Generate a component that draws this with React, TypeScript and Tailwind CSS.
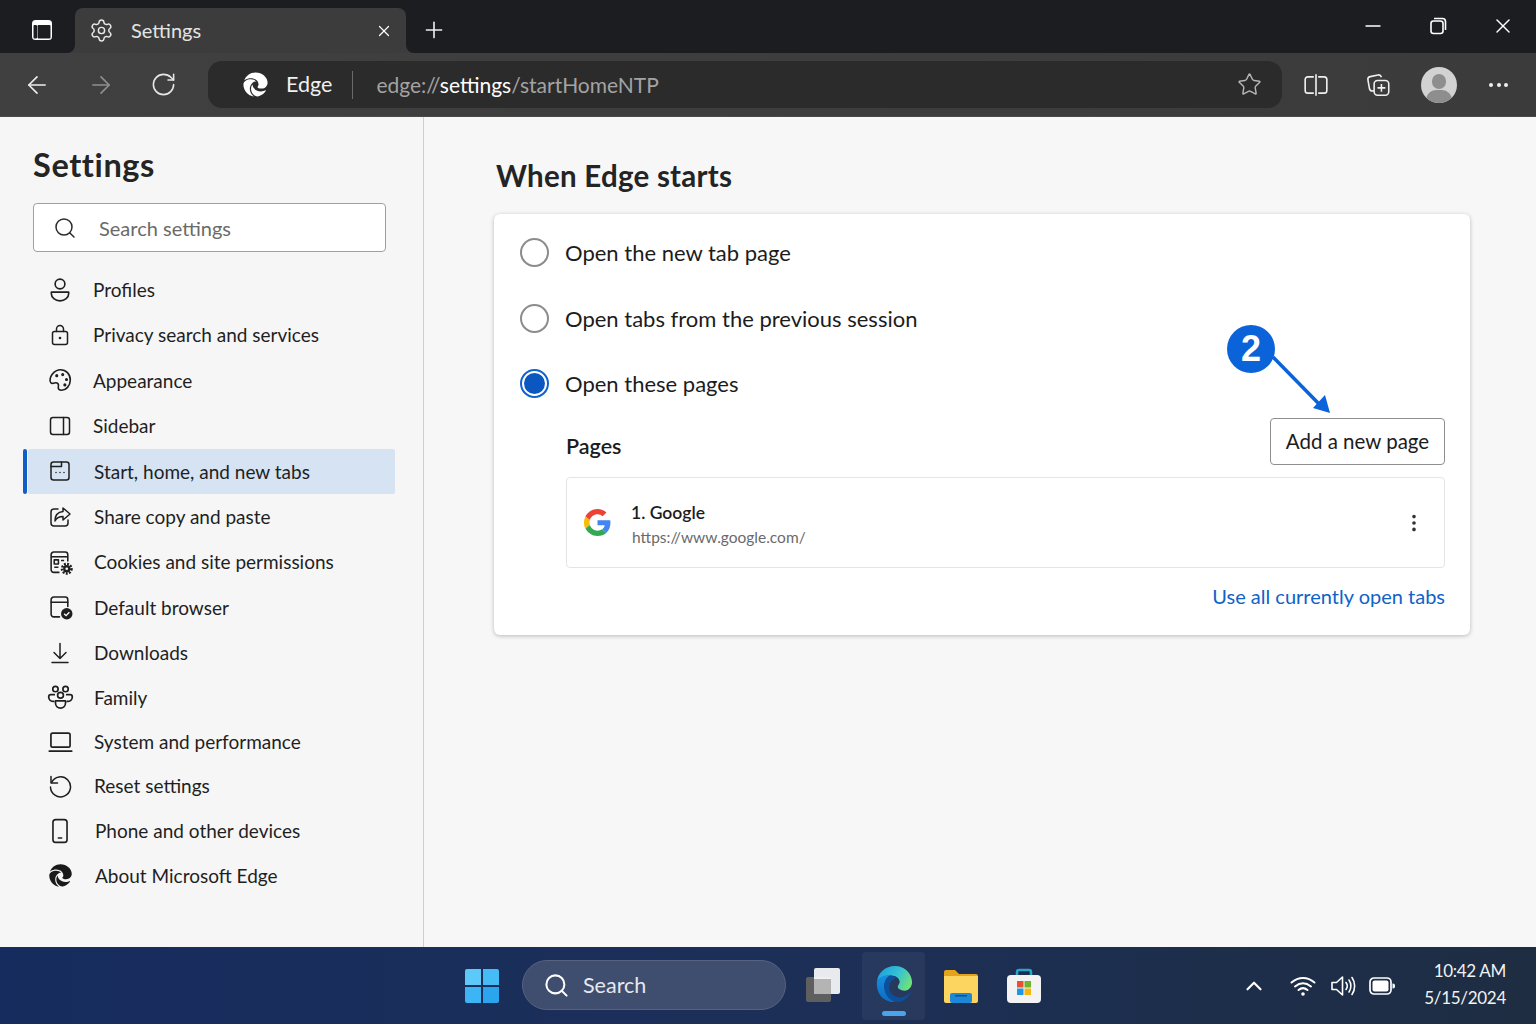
import type { ReactNode } from "react"
import {
  ArrowLeft,
  ArrowRight,
  ChevronUp,
  EllipsisVertical,
  Minus,
  Plus,
  RotateCw,
  Search,
  Settings,
  Star,
  X,
} from "lucide-react"
import { RiEdgeNewFill } from "react-icons/ri"

function Line({ children, className = "w-6 h-6" }: { children: ReactNode; className?: string }) {
  return (
    <svg
      viewBox="0 0 24 24"
      fill="none"
      stroke="currentColor"
      strokeWidth="1.5"
      strokeLinecap="round"
      strokeLinejoin="round"
      className={className}
    >
      {children}
    </svg>
  )
}

const navItems: { label: string; row: string; text: string; icon: ReactNode }[] = [
  {
    label: "Profiles",
    row: "h-[45px]",
    text: "ml-[18px]",
    icon: (
      <Line className="w-[26px] h-[26px]">
        <circle cx="12" cy="6.500" r="4.500" />
        <path d="M4 14h16v1.500c0 3.500-3.500 6.500-8 6.500s-8-3-8-6.500z" />
      </Line>
    ),
  },
  {
    label: "Privacy search and services",
    row: "h-[45.5px]",
    text: "ml-[18px]",
    icon: (
      <Line>
        <rect x="4.500" y="8.500" width="15" height="13" rx="2" />
        <path d="M8.500 8.500V6a3.500 3.500 0 0 1 7 0v2.500" />
        <circle cx="12" cy="15" r=".6" fill="currentColor" />
      </Line>
    ),
  },
  {
    label: "Appearance",
    row: "h-[45.5px]",
    text: "ml-[18px]",
    icon: (
      <Line className="w-[26px] h-[26px]">
        <path d="M12.500 2.500c5 0 9 4 9 9.500s-4 9.500-8 9.500c-2.500 0-3.500-1.500-3-3.500.5-2-.5-3.500-2.500-3.500-1 0-3 1.500-4.500 0C2 13 3 9 5 6.500s4.500-4 7.500-4z" />
        <circle cx="9" cy="8" r=".7" fill="currentColor" />
        <circle cx="14.500" cy="7" r=".7" fill="currentColor" />
        <circle cx="18" cy="11.500" r=".7" fill="currentColor" />
        <circle cx="16.500" cy="16.500" r=".7" fill="currentColor" />
      </Line>
    ),
  },
  {
    label: "Sidebar",
    row: "h-[45.5px]",
    text: "ml-[18px]",
    icon: (
      <Line>
        <rect x="2.500" y="3.500" width="19" height="17" rx="2.500" />
        <path d="M15.500 3.500v17" />
      </Line>
    ),
  },
  {
    label: "Start, home, and new tabs",
    row: "h-[45.500px]",
    text: "ml-[19px]",
    icon: (
      <Line>
        <rect x="3" y="3" width="18" height="18" rx="2.500" />
        <path d="M3 7.500h10.500V3" />
        <path d="M8 13.500h.01M12 13.500h.01M16 13.500h.01" />
      </Line>
    ),
  },
  {
    label: "Share copy and paste",
    row: "h-[45.500px]",
    text: "ml-[19px]",
    icon: (
      <Line>
        <path d="M10 4H6a3 3 0 0 0-3 3v11a3 3 0 0 0 3 3h11a3 3 0 0 0 3-3v-3" />
        <path d="M15 3l7 6-7 6v-3.500c-4 0-6.500 1.500-8 4.500 0-5.500 3-9 8-9.500z" />
      </Line>
    ),
  },
  {
    label: "Cookies and site permissions",
    row: "h-[45px]",
    text: "ml-[19px]",
    icon: (
      <svg viewBox="0 0 24 24" className="w-[25px] h-[25px]">
        <g fill="none" stroke="currentColor" strokeWidth="1.500" strokeLinejoin="round">
          <path d="M11 21.500H5.500a2.500 2.500 0 0 1-2.500-2.500V4.500A2.500 2.500 0 0 1 5.500 2h11A2.500 2.500 0 0 1 19 4.500V11" />
          <path d="M3 6.500h16" />
          <path d="M6 9.500h4v4H6zM6 16.500h4M12.500 10h3" />
        </g>
        <circle cx="18" cy="18" r="4.500" fill="none" stroke="currentColor" strokeWidth="2.500" strokeDasharray="1.800 1.200" />
        <circle cx="18" cy="18" r="3.500" fill="currentColor" />
        <circle cx="18" cy="18" r="1.300" fill="#f6f6f6" />
      </svg>
    ),
  },
  {
    label: "Default browser",
    row: "h-[45.500px]",
    text: "ml-[19px]",
    icon: (
      <svg viewBox="0 0 24 24" className="w-[25px] h-[25px]">
        <g fill="none" stroke="currentColor" strokeWidth="1.500" strokeLinecap="round">
          <path d="M11 21H5.500A2.500 2.500 0 0 1 3 18.500v-14A2.500 2.500 0 0 1 5.500 2h11A2.500 2.500 0 0 1 19 4.500V11" />
          <path d="M3 7h16" />
        </g>
        <circle cx="18" cy="18" r="5.500" fill="currentColor" />
        <path d="M15.500 18l1.800 1.800 3.200-3.300" fill="none" stroke="#fff" strokeWidth="1.300" />
      </svg>
    ),
  },
  {
    label: "Downloads",
    row: "h-[45px]",
    text: "ml-[19px]",
    icon: (
      <Line>
        <path d="M12 2.500V17M6 11.500l6 6 6-6M4 21.500h16" />
      </Line>
    ),
  },
  {
    label: "Family",
    row: "h-[44.500px]",
    text: "ml-[19px]",
    icon: (
      <Line className="w-[27px] h-[27px]">
        <circle cx="7.500" cy="4.500" r="2.400" />
        <circle cx="16.500" cy="4.500" r="2.400" />
        <circle cx="12" cy="10" r="2.600" />
        <path d="M7.500 15h9v1.500c0 3-2 5-4.500 5s-4.500-2-4.500-5z" />
        <path d="M6.500 9.500H3.500C2 9.500 1.500 10.500 1.500 11.500c0 2.500 2 4 4.500 4M17.500 9.500h3c1.500 0 2 1 2 2 0 2.500-2 4-4.500 4" />
      </Line>
    ),
  },
  {
    label: "System and performance",
    row: "h-[44px]",
    text: "ml-[19px]",
    icon: (
      <Line className="w-[27px] h-[27px]">
        <rect x="3.500" y="4.500" width="17" height="12.500" rx="1.500" />
        <path d="M2 20.500h20" />
      </Line>
    ),
  },
  {
    label: "Reset settings",
    row: "h-[45px]",
    text: "ml-[19px]",
    icon: (
      <Line>
        <path d="M3 2.500V9h6.500" />
        <path d="M3.500 8.500A10 10 0 1 1 2.500 13" />
      </Line>
    ),
  },
  {
    label: "Phone and other devices",
    row: "h-[44.500px]",
    text: "ml-[20px]",
    icon: (
      <Line className="w-[26px] h-[26px]">
        <rect x="5.500" y="1.500" width="13" height="21" rx="2.500" />
        <path d="M10.500 18.500h3" />
      </Line>
    ),
  },
  {
    label: "About Microsoft Edge",
    row: "h-[45px]",
    text: "ml-[20px]",
    icon: <RiEdgeNewFill className="w-[27px] h-[27px] text-[#1a1a1a]" />,
  },
]

function ColorEdge() {
  return (
    <svg viewBox="0 0 40 40" className="w-[38px] h-[38px]">
      <defs>
        <linearGradient id="edgeTop" x1="0" y1="0.2" x2="1" y2="0.6">
          <stop offset="0" stopColor="#1aa0dc" />
          <stop offset="0.55" stopColor="#35c1d4" />
          <stop offset="1" stopColor="#6fe07a" />
        </linearGradient>
        <linearGradient id="edgeBody" x1="0" y1="0" x2="0" y2="1">
          <stop offset="0" stopColor="#1690e0" />
          <stop offset="1" stopColor="#0b6cc4" />
        </linearGradient>
      </defs>
      <path d="M2 18C3 8 11 1 21 1c10 0 18 8 18 17 0 5-3 9-8 9-4 0-7-2-7-4 0-2 2-3 2-5 0-4-4-7-9-7C10 11 4 13 2 18z" fill="url(#edgeTop)" />
      <path d="M2 18C4 13 10 10 16 11c-4 2-7 7-6 14 1 7 6 12 12 14C10 40 1 31 2 18z" fill="url(#edgeBody)" />
      <path d="M16 11c3 0 5 1 6 3-4 1-7 5-7 10 0 5 4 9 9 10 5 1 10-1 14-6-2 6-9 12-16 11-6-2-11-7-12-14-1-7 2-12 6-14z" fill="#0c4f9c" />
    </svg>
  )
}

function GoogleLogo() {
  return (
    <svg viewBox="0 0 48 48" className="w-[27px] h-[27px]">
      <path fill="#EA4335" d="M24 9.500c3.500 0 6.700 1.300 9.100 3.500l6.800-6.800C35.800 2.400 30.300 0 24 0 14.600 0 6.500 5.400 2.600 13.200l7.900 6.200C12.400 13.700 17.700 9.500 24 9.500z" />
      <path fill="#4285F4" d="M47 24.500c0-1.600-.1-3.100-.4-4.500H24v9h12.900c-.6 3-2.200 5.500-4.700 7.200l7.700 6C44.400 38 47 31.800 47 24.500z" />
      <path fill="#FBBC05" d="M10.500 28.600c-.5-1.400-.8-3-.8-4.600s.3-3.200.8-4.600l-7.900-6.200C.9 16.500 0 20.100 0 24s.9 7.500 2.600 10.800l7.900-6.200z" />
      <path fill="#34A853" d="M24 48c6.500 0 11.900-2.100 15.900-5.800l-7.700-6c-2.200 1.500-4.900 2.300-8.200 2.300-6.300 0-11.600-4.200-13.500-9.900l-7.900 6.200C6.500 42.600 14.600 48 24 48z" />
    </svg>
  )
}

function Radio({ checked, label }: { checked?: boolean; label: string }) {
  return (
    <div className="flex items-center h-[65.500px]">
      {checked ? (
        <div className="w-[29px] h-[29px] rounded-full border-2 border-[#0f62d0] bg-white flex items-center justify-center">
          <div className="w-[21px] h-[21px] rounded-full bg-[#0a57c2]" />
        </div>
      ) : (
        <div className="w-[29px] h-[29px] rounded-full border-2 border-[#8c8c8c] bg-white" />
      )}
      <span className="ml-[16px] text-[22px] text-[#1c1c1c]">{label}</span>
    </div>
  )
}

export default function App() {
  return (
    <div className="w-[1536px] h-[1024px] overflow-hidden flex flex-col font-['Lato',sans-serif] bg-[#f7f7f7]">
      {/* title bar */}
      <div className="h-[53px] bg-[#1c1d20] flex items-end shrink-0 text-white">
        <div className="w-[75px] h-[53px] flex items-center justify-center pl-[9px] pt-[7px]">
          <svg viewBox="0 0 24 24" className="w-[24px] h-[24px]">
            <rect x="2" y="2" width="20" height="20" rx="3.500" fill="#fff" />
            <rect x="7.500" y="7" width="13" height="13.500" rx="1" fill="#1c1d20" />
            <rect x="3.500" y="7" width="3.500" height="13.500" rx="1" fill="#1c1d20" />
          </svg>
        </div>
        <div className="relative w-[331px] h-[45px] bg-[#3c3c3c] rounded-t-lg flex items-center pl-[14px] pr-[13px]">
          <div className="absolute left-[-8px] bottom-0 w-2 h-2 bg-[#3c3c3c]">
            <div className="w-2 h-2 bg-[#1c1d20] rounded-br-lg" />
          </div>
          <div className="absolute right-[-8px] bottom-0 w-2 h-2 bg-[#3c3c3c]">
            <div className="w-2 h-2 bg-[#1c1d20] rounded-bl-lg" />
          </div>
          <Settings className="w-[25px] h-[25px] text-[#e8e8e8]" strokeWidth={1.4} />
          <span className="ml-[17px] pb-[2px] text-[20px] text-[#e4e4e4]">Settings</span>
          <X className="ml-auto w-[18px] h-[18px] text-white" strokeWidth={1.6} />
        </div>
        <div className="ml-[15px] h-[53px] flex items-center pt-[7px]">
          <Plus className="w-[26px] h-[26px] text-[#eeeeee]" strokeWidth={1.5} />
        </div>
        <div className="ml-auto h-[53px] flex items-center pb-[1px] pr-[21px] gap-[41px]">
          <Minus className="w-[24px] h-[24px]" strokeWidth={1.4} />
          <svg viewBox="0 0 24 24" fill="none" stroke="currentColor" strokeWidth="1.600" className="w-[24px] h-[24px]">
            <rect x="5" y="7" width="12" height="12.500" rx="2.500" />
            <path d="M8 4.500h8.500a3 3 0 0 1 3 3V16" />
          </svg>
          <X className="w-[24px] h-[24px]" strokeWidth={1.4} />
        </div>
      </div>

      {/* toolbar */}
      <div className="h-[64px] bg-gradient-to-r from-[#404040] to-[#3b3b3b] flex items-center shrink-0 border-b border-[#4a4a4a]">
        <div className="ml-[23px] flex items-center gap-[35.500px]">
          <ArrowLeft className="w-[28px] h-[28px] text-[#ededed]" strokeWidth={1.4} />
          <ArrowRight className="w-[28px] h-[28px] text-[#8f8f8f]" strokeWidth={1.4} />
          <RotateCw className="w-[27px] h-[27px] text-[#e6e6e6]" strokeWidth={1.4} />
        </div>
        <div className="ml-[31px] w-[1074px] h-[47px] rounded-[14px] bg-[#2b2b2b] flex items-center pl-[33px] pr-[20px]">
          <RiEdgeNewFill className="w-[29px] h-[29px] text-white" />
          <span className="ml-[16px] text-[21.500px] text-[#f0f0f0]">Edge</span>
          <div className="ml-[20px] w-px h-[28px] bg-[#6a6a6a]" />
          <span className="ml-[23px] text-[21px] text-[#a3a3a3]">
            edge://<span className="text-white">settings</span>/startHomeNTP
          </span>
          <Star className="ml-auto w-[25px] h-[25px] text-[#b5b5b5]" strokeWidth={1.4} />
        </div>
        <div className="ml-[21px] flex items-center text-[#efefef]">
          <svg viewBox="0 0 24 24" fill="none" stroke="currentColor" strokeWidth="1.500" className="w-[26px] h-[26px]">
            <path d="M10 4.500H4.500A2.500 2.500 0 0 0 2 7v10a2.500 2.500 0 0 0 2.500 2.500H10M14 4.500h5.500A2.500 2.500 0 0 1 22 7v10a2.500 2.500 0 0 1-2.500 2.500H14" />
            <path d="M12 2v20" />
          </svg>
          <svg viewBox="0 0 24 24" fill="none" stroke="currentColor" strokeWidth="1.400" strokeLinejoin="round" className="ml-[35px] w-[27px] h-[27px]">
            <path d="M9 17.500l-1.500.3c-1.500 0-2.300-.8-2.600-2L3.500 8c-.3-1.500.5-2.700 2-3l7-1.500c1.500-.3 2.500.5 3 2" />
            <rect x="9" y="8.500" width="13" height="13" rx="3" />
            <path d="M15.500 11.500v7M12 15h7" />
          </svg>
          <div className="relative ml-[30px] w-[36px] h-[36px] rounded-full bg-[#d2d2d2] overflow-hidden">
            <div className="absolute left-[11px] top-[7px] w-[14px] h-[15px] rounded-full bg-[#8e8e8e]" />
            <div className="absolute left-[5px] top-[23px] w-[26px] h-[20px] rounded-full bg-[#8e8e8e]" />
          </div>
          <div className="ml-[32px] flex gap-[3.500px]">
            <div className="w-[4px] h-[4px] rounded-full bg-[#efefef]" />
            <div className="w-[4px] h-[4px] rounded-full bg-[#efefef]" />
            <div className="w-[4px] h-[4px] rounded-full bg-[#efefef]" />
          </div>
        </div>
      </div>

      {/* body */}
      <div className="flex-1 flex min-h-0">
        <aside className="w-[424px] shrink-0 bg-[#f6f6f6] border-r border-[#cfcfcf] pt-[25px]">
          <h1 className="ml-[33px] text-[32.500px] leading-[46px] tracking-[0.6px] font-bold text-[#242424]">Settings</h1>
          <div className="ml-[33px] mt-[15px] w-[353px] h-[49px] rounded-[4px] border border-[#a0a0a0] bg-white flex items-center pl-[19px]">
            <Search className="w-[24px] h-[24px] text-[#2a2a2a]" strokeWidth={1.5} />
            <span className="ml-[22px] text-[20px] text-[#6a6a6a]">Search settings</span>
          </div>
          <nav className="mt-[15px] ml-[23px] w-[372px]">
            {navItems.map((item) => {
              const active = item.label === "Start, home, and new tabs"
              return (
                <div key={item.label} className={`${item.row} flex items-center text-[#1f1f1f]`}>
                  <div className={`w-[4px] h-full rounded-sm ${active ? "bg-[#0f5fc4]" : ""}`} />
                  <div className={`ml-[1px] flex-1 h-full flex items-center rounded-[2px] ${active ? "bg-[#d5e3f2]" : ""}`}>
                    <div className="ml-[17px] w-[30px] flex items-center justify-center">{item.icon}</div>
                    <span className={`${item.text} pt-[1px] text-[19px]`}>{item.label}</span>
                  </div>
                </div>
              )
            })}
          </nav>
        </aside>

        <main className="flex-1 pl-[70px] pt-[36px]">
          <h2 className="ml-[2px] text-[29.500px] leading-[46px] tracking-[0.25px] font-bold text-[#242424]">When Edge starts</h2>
          <section className="relative mt-[15px] w-[976px] h-[421px] rounded-[6px] bg-white shadow-[0_1px_4px_rgba(0,0,0,0.25)] pl-[26px] pt-[6px]">
            <Radio label="Open the new tab page" />
            <Radio label="Open tabs from the previous session" />
            <Radio checked label="Open these pages" />

            <div className="ml-[46px] mr-[25px] flex items-end justify-between h-[48px]">
              <span className="pb-[2px] text-[21.500px] font-semibold text-[#1c1c1c]">Pages</span>
              <button className="w-[175px] h-[47px] rounded-[4px] border border-[#8f8f8f] bg-white text-[20.500px] text-[#1c1c1c]">
                Add a new page
              </button>
            </div>
            <div className="mt-[12px] ml-[46px] mr-[25px] h-[91px] rounded-[4px] border border-[#e4e4e4] flex items-center pl-[17px] pr-[19px]">
              <GoogleLogo />
              <div className="ml-[20px] pt-[5px] flex flex-col">
                <span className="text-[17.500px] leading-[25px] font-semibold text-[#1c1c1c]">1. Google</span>
                <span className="ml-[1px] text-[15.500px] leading-[25px] text-[#6a6a6a]">https://www.google.com/</span>
              </div>
              <EllipsisVertical className="ml-auto mt-[1px] w-[22px] h-[22px] text-[#333333]" strokeWidth={2} />
            </div>
            <div className="mt-[13px] mr-[25px] text-right text-[20px] text-[#0f62c8]">Use all currently open tabs</div>

            {/* annotation over the card */}
            <div className="absolute left-[733px] top-[111px] w-[48px] h-[48px] rounded-full bg-[#0a63d8] flex items-center justify-center text-white text-[36px] font-bold font-['Liberation_Sans',sans-serif]">
              2
            </div>
            <svg viewBox="0 0 70 70" className="absolute left-[775px] top-[138px] w-[70px] h-[70px]">
              <path d="M4 5L52 54" stroke="#0a63d8" strokeWidth="3.500" fill="none" />
              <path d="M61 61L56 43 44 56z" fill="#0a63d8" />
            </svg>
          </section>
        </main>
      </div>

      {/* taskbar */}
      <div className="h-[77px] shrink-0 bg-gradient-to-r from-[#162c5e] via-[#1c2f58] to-[#1e2d42] flex items-center text-white relative">
        <div className="ml-[465px] grid grid-cols-2 gap-[2px] w-[34px] h-[34px]">
          <div className="rounded-tl-[2px] bg-[#5cc9f8]" />
          <div className="rounded-tr-[2px] bg-[#45bcf5]" />
          <div className="rounded-bl-[2px] bg-[#3db4f3]" />
          <div className="rounded-br-[2px] bg-[#2ba6ee]" />
        </div>
        <div className="ml-[23px] -mt-[1px] w-[264px] h-[50px] rounded-full bg-[#3f4d6e] border border-[#56627f] flex items-center pl-[20px]">
          <Search className="w-[27px] h-[27px]" strokeWidth={1.8} />
          <span className="ml-[13px] text-[21.500px] text-[#e6e8ee]">Search</span>
        </div>
        <div className="relative ml-[20px] w-[34px] h-[34px] -mt-[2px]">
          <div className="absolute left-0 bottom-0 w-[25px] h-[25px] rounded-[2px] bg-[#5f5f5f]" />
          <div className="absolute right-0 top-0 w-[26px] h-[26px] rounded-[2px] bg-white/90" />
          <div className="absolute left-[8px] top-[11px] w-[17px] h-[15px] bg-[#b4b4b4]" />
        </div>
        <div className="ml-[22px] w-[63px] h-[68px] rounded-[4px] bg-white/5 flex flex-col items-center pt-[13px]">
          <ColorEdge />
          <div className="mt-[8px] w-[24px] h-[5px] rounded-full bg-[#4ba3ea]" />
        </div>
        <svg viewBox="0 0 36 36" className="ml-[18px] w-[36px] h-[36px]">
          <path d="M1 4a2 2 0 0 1 2-2h9l4 4h17a2 2 0 0 1 2 2v3H1z" fill="#e5a21b" />
          <path d="M1 8h34v25a2 2 0 0 1-2 2H3a2 2 0 0 1-2-2z" fill="#fbd55f" />
          <rect x="7" y="25" width="22" height="10" rx="2" fill="#1e88d8" />
          <rect x="12" y="27" width="12" height="1.500" fill="#0c4f8c" />
        </svg>
        <svg viewBox="0 0 36 36" className="ml-[27px] w-[36px] h-[38px]">
          <path d="M11 8V4a2 2 0 0 1 2-2h10a2 2 0 0 1 2 2v4" fill="none" stroke="#2aa5c8" strokeWidth="2.500" />
          <rect x="1" y="7" width="34" height="28" rx="4" fill="#f3f3f3" />
          <rect x="11" y="13" width="6.500" height="6.500" fill="#e8502f" />
          <rect x="18.500" y="13" width="6.500" height="6.500" fill="#6fb52c" />
          <rect x="11" y="20.500" width="6.500" height="6.500" fill="#1f97e6" />
          <rect x="18.500" y="20.500" width="6.500" height="6.500" fill="#f5b70f" />
        </svg>
        <ChevronUp className="ml-[199px] w-[26px] h-[26px]" strokeWidth={2} />
        <svg viewBox="0 0 26 22" fill="none" stroke="#fff" strokeWidth="2" strokeLinecap="round" className="ml-[23px] w-[26px] h-[22px]">
          <path d="M1.500 7.500c7-6 16-6 23 0M5 11.500c5-4 11-4 16 0M8.500 15c3-2.500 6-2.500 9 0" />
          <circle cx="13" cy="19" r="1.800" fill="#fff" stroke="none" />
        </svg>
        <svg viewBox="0 0 26 24" fill="none" stroke="#fff" strokeWidth="1.600" strokeLinejoin="round" strokeLinecap="round" className="ml-[14px] w-[26px] h-[24px]">
          <path d="M2 8.500h4.500L12.500 3v18l-6-5.500H2z" />
          <path d="M16 8.500c1.500 2 1.500 5 0 7M19 6c2.500 3.500 2.500 8.500 0 12M22 3.500c3.500 5 3.500 12 0 17" />
        </svg>
        <svg viewBox="0 0 26 18" fill="none" className="ml-[13px] w-[26px] h-[18px]">
          <rect x="1" y="1" width="21" height="16" rx="4" stroke="#fff" strokeWidth="1.700" />
          <rect x="3.500" y="3.500" width="16" height="11" rx="2" fill="#fff" />
          <path d="M23.500 6.500h.5a2 2 0 0 1 2 2v1a2 2 0 0 1-2 2h-.5z" fill="#fff" />
        </svg>
        <div className="ml-auto pr-[30px] pb-[4px] flex flex-col items-end text-[17px] leading-[27px] tracking-[-0.3px] text-[#f2f2f2]">
          <span>10:42 AM</span>
          <span>5/15/2024</span>
        </div>
      </div>
    </div>
  )
}
